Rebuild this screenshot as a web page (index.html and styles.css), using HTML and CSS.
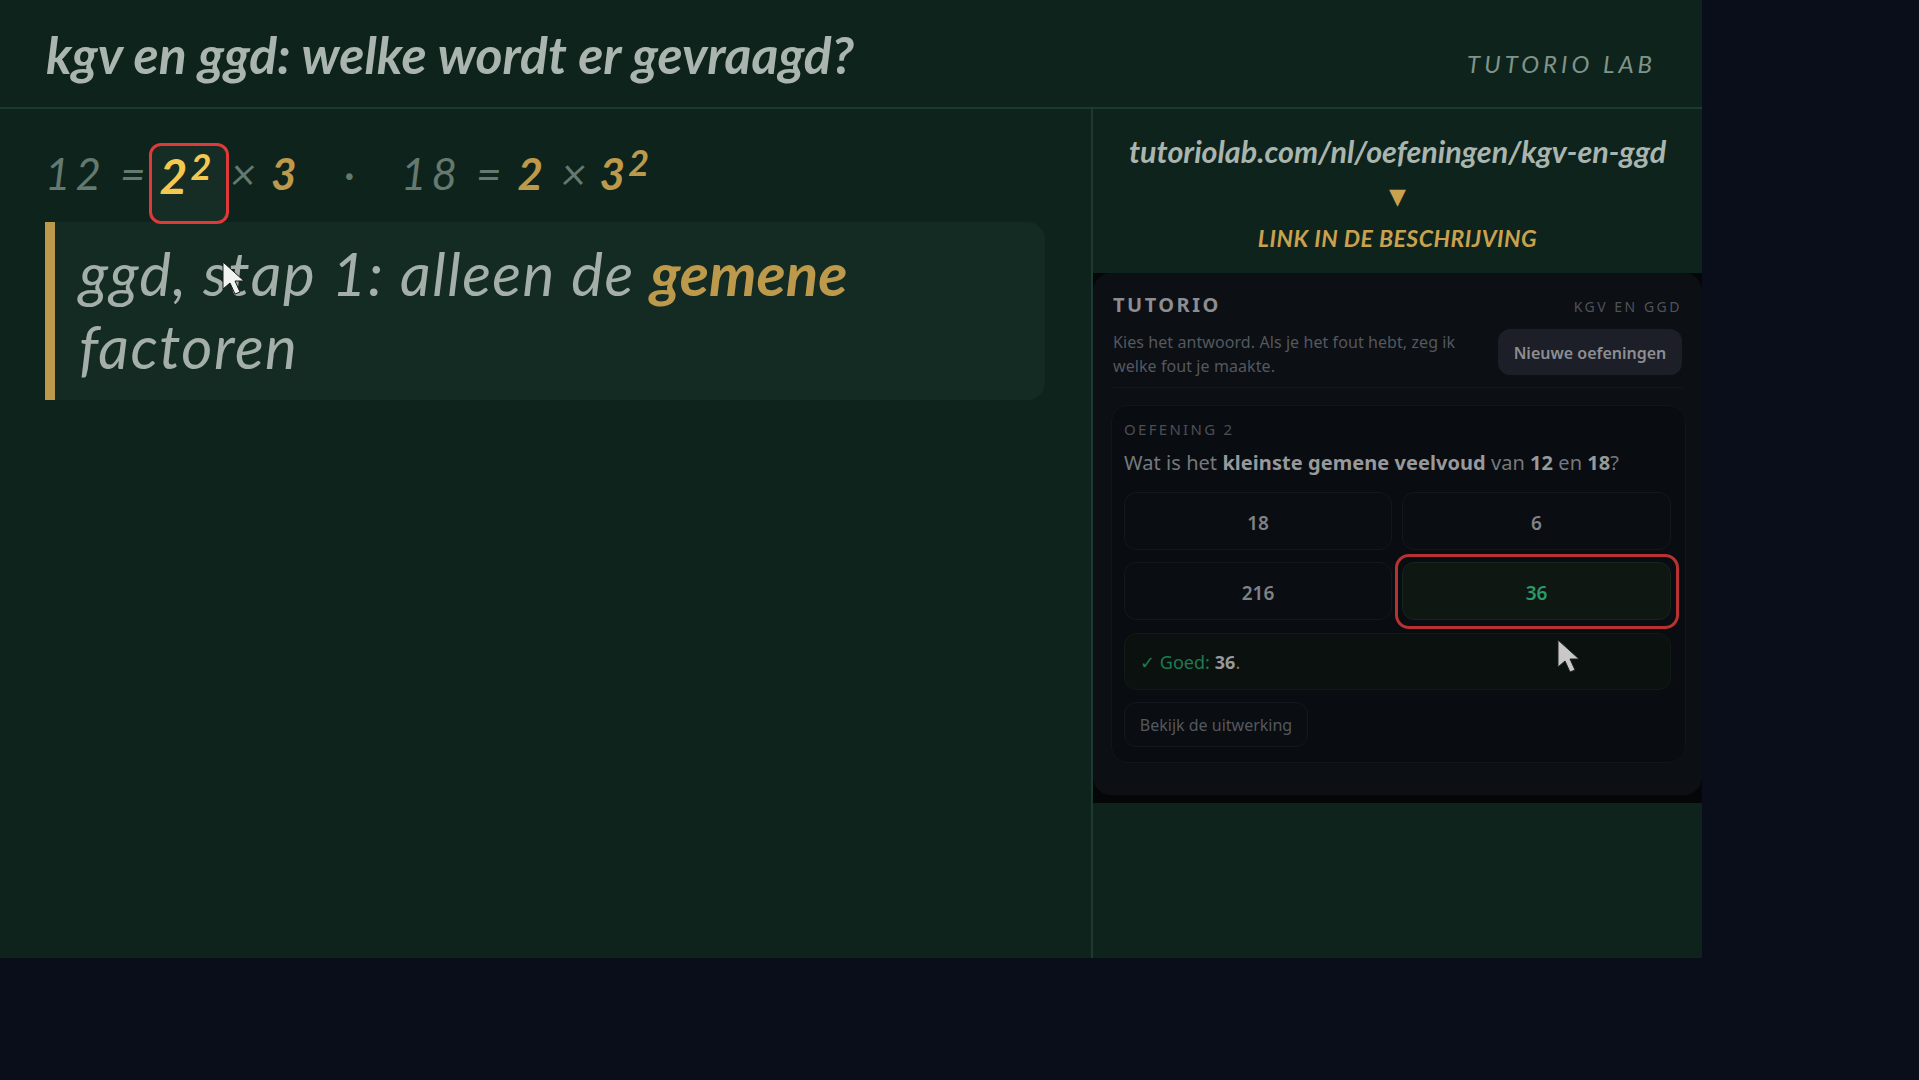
FILE: index.html
```html
<!DOCTYPE html>
<html lang="nl">
<head>
    <meta charset="UTF-8">
    <title>kgv en ggd</title>
    <link rel="stylesheet" href="styles.css">
</head>
<body>
    <div class="frame">
        <header class="top">
            <h1>kgv en ggd: welke wordt er gevraagd?</h1>
            <span class="brand">TUTORIO LAB</span>
        </header>
        <div class="main">
            <section class="board">
                <div class="factors">
                    <span class="dim num-a">12</span>
                    <span class="dim eq-a">=</span>
                    <span class="hit">2<sup>2</sup></span>
                    <span class="dim times-a">×</span>
                    <span class="gold three-a">3</span>
                    <span class="dim dot">·</span>
                    <span class="dim">18</span>
                    <span class="dim eq-b">=</span>
                    <span class="gold two-b">2</span>
                    <span class="dim times-b">×</span>
                    <span class="gold three-b">3<sup>2</sup></span>
                </div>
                <div class="callout">ggd, stap 1: alleen de <span class="gold">gemene</span> factoren</div>
            </section>
            <aside class="side">
                <div class="link-box">
                    <div class="url">tutoriolab.com/nl/oefeningen/kgv-en-ggd</div>
                    <div class="arrow">▼</div>
                    <div class="link-note">LINK IN DE BESCHRIJVING</div>
                </div>
                <div class="app">
                    <div class="panel">
                        <div class="panel-head">
                            <div class="panel-title">
                                <strong>TUTORIO</strong>
                                <span>KGV EN GGD</span>
                            </div>
                            <div class="panel-row">
                                <p>Kies het antwoord. Als je het fout hebt, zeg ik welke fout je maakte.</p>
                                <button class="btn-new">Nieuwe oefeningen</button>
                            </div>
                        </div>
                        <div class="card">
                            <div class="card-label">OEFENING 2</div>
                            <div class="question">Wat is het <b>kleinste gemene veelvoud</b> van <b>12</b> en <b>18</b>?</div>
                            <div class="options">
                                <button class="opt">18</button>
                                <button class="opt">6</button>
                                <button class="opt">216</button>
                                <button class="opt right">36</button>
                            </div>
                            <div class="result"><span class="ok"><span class="tick">✓</span> Goed:</span> <b>36</b>.</div>
                            <button class="btn-work">Bekijk de uitwerking</button>
                        </div>
                    </div>
                </div>
            </aside>
        </div>
    </div>

    <svg class="cursor cursor-a" width="24" height="34" viewBox="0 0 24 34"><path d="M1 1v27l7-6 5 11 5-2-5-11h9z" fill="#f2f4f2" stroke="#1a1a1a"/></svg>
    <svg class="cursor cursor-b" width="24" height="34" viewBox="0 0 24 34"><path d="M1 1v27l7-6 5 11 5-2-5-11h9z" fill="#c8c8c8" stroke="#222"/></svg>
</body>
</html>
```

FILE: styles.css
```css
* {
    box-sizing: border-box;
}

body {
    margin: 0;
    height: 1080px;
    overflow: hidden;
    position: relative;
    background-color: #0a0e1a;
    font-family: "Noto Sans", sans-serif;
}

.frame {
    width: 1702px;
    height: 958px;
    background-color: #0f231d;
    display: flex;
    flex-direction: column;
    font-family: Lato, sans-serif;
    font-style: italic;
}

.top {
    height: 109px;
    padding: 0 46px;
    display: flex;
    justify-content: space-between;
    align-items: center;
    border-bottom: 2px solid #1c3a30;
}

.top h1 {
    margin: 0;
    font-size: 51.7px;
    font-weight: 700;
    color: #a9b5ae;
}

.brand {
    margin-top: 20px;
    font-size: 24px;
    letter-spacing: 4px;
    color: #7f9489;
}

.main {
    flex: 1;
    display: flex;
}

.board {
    flex: 1;
    padding: 34px 46px 0 45px;
}

.factors {
    height: 79px;
    display: flex;
    align-items: flex-start;
    font-size: 44px;
    line-height: 60px;
}

.factors sup {
    margin-left: 3px;
    font-size: 36px;
    line-height: 0;
    vertical-align: 14px;
}

.dim {
    color: #64796f;
    letter-spacing: 5px;
}

.eq-a {
    margin: 0 3px 0 14px;
    letter-spacing: 0;
}

.times-a {
    margin: 0 10px 0 2px;
}

.dot {
    margin: 0 41px 0 47px;
}

.eq-b {
    margin: 0 16px 0 14px;
    letter-spacing: 0;
}

.two-b {
    margin-right: 18px;
}

.times-b {
    margin-right: 8px;
}

.gold {
    color: #bd9a4b;
    font-weight: 700;
}

.hit {
    width: 80px;
    height: 81px;
    padding: 0 8px;
    font-size: 48px;
    color: #f5c94f;
    font-weight: 700;
    background-color: #152d25;
    border: 3px solid #e0393a;
    border-radius: 12px;
}

.callout {
    width: 1000px;
    height: 178px;
    padding: 15px 110px 0 24px;
    font-size: 60px;
    letter-spacing: 1.5px;
    line-height: 73px;
    color: #a3afa8;
    background-color: #142b24;
    border-left: 10px solid #bd9a4b;
    border-radius: 0 18px 18px 0;
}

.callout .gold {
    letter-spacing: 0;
}

.side {
    width: 611px;
    border-left: 2px solid #1c3a30;
    display: flex;
    flex-direction: column;
}

.link-box {
    height: 164px;
    padding-top: 22px;
    text-align: center;
}

.url {
    font-size: 30.5px;
    font-weight: 700;
    line-height: 40px;
    color: #a9b5ae;
}

.arrow {
    font-family: "DejaVu Sans", sans-serif;
    font-style: normal;
    font-size: 22px;
    line-height: 28px;
    margin-top: 12px;
    color: #c9a24f;
}

.link-note {
    margin-top: 12px;
    font-size: 23px;
    font-weight: 700;
    letter-spacing: 0.5px;
    line-height: 30px;
    color: #c9a24f;
}

.app {
    height: 530px;
    background-color: #050608;
    font-family: "Noto Sans", sans-serif;
    font-style: normal;
}

.panel {
    height: 522px;
    padding: 17px 20px 0 20px;
    background-color: #0c0f14;
    border-radius: 18px;
}

.panel-head {
    height: 98px;
    border-bottom: 1px solid #14181d;
}

.panel-title {
    display: flex;
    justify-content: space-between;
    align-items: center;
    height: 28px;
}

.panel-title strong {
    font-size: 20px;
    letter-spacing: 2.5px;
    color: #8b8d90;
}

.panel-title span {
    font-size: 14px;
    letter-spacing: 2.5px;
    margin-top: 5px;
    color: #4f535a;
}

.panel-row {
    display: flex;
    justify-content: space-between;
    align-items: flex-start;
    margin-top: 10px;
}

.panel-row p {
    width: 345px;
    margin: 0;
    padding-top: 2px;
    font-size: 16px;
    letter-spacing: 0.08px;
    line-height: 24px;
    color: #54585f;
}

.btn-new {
    width: 184px;
    height: 46px;
    margin-top: 1px;
    padding-top: 2px;
    font: 600 16px "Noto Sans", sans-serif;
    color: #8c8e93;
    background-color: #1c1f27;
    border: 0;
    border-radius: 12px;
}

.card {
    height: 358px;
    margin-top: 17px;
    margin-left: -2px;
    margin-right: -4px;
    padding: 12px 12px 0;
    background-color: #090c11;
    border: 1px solid #12161a;
    border-radius: 16px;
}

.card-label {
    font-size: 15px;
    line-height: 22px;
    letter-spacing: 2.3px;
    color: #4b4f55;
}

.question {
    margin-top: 7px;
    font-size: 20px;
    letter-spacing: 0.05px;
    line-height: 32px;
    color: #76797c;
}

.question b {
    color: #97999b;
}

.options {
    display: grid;
    grid-template-columns: 268px 269px;
    grid-auto-rows: 58px;
    column-gap: 10px;
    row-gap: 12px;
    margin-top: 13px;
}

.opt {
    padding-top: 4px;
    font: 600 19px "Noto Sans", sans-serif;
    color: #7f8286;
    background-color: #0a0d12;
    border: 1px solid #14181d;
    border-radius: 12px;
}

.opt.right {
    color: #2b9a68;
    background-color: #0e1712;
    border-color: #17251f;
    position: relative;
}

.opt.right::after {
    content: "";
    position: absolute;
    inset: -9px -9px -10px -8px;
    border: 3px solid #b83232;
    border-radius: 14px;
}

.result {
    width: 547px;
    height: 57px;
    margin-top: 13px;
    padding: 0 15px;
    display: flex;
    align-items: center;
    gap: 5px;
    font-size: 18px;
    color: #76797c;
    background-color: #0a110e;
    border: 1px solid #111a16;
    border-radius: 12px;
}

.result b {
    color: #97999b;
    margin-right: -5px;
}

.ok {
    color: #1f7a52;
}

.tick {
    font-family: "DejaVu Sans", sans-serif;
    font-weight: 700;
}

.btn-work {
    display: block;
    width: 184px;
    height: 45px;
    margin-top: 12px;
    padding-top: 2px;
    font: 400 16px "Noto Sans", sans-serif;
    color: #54585f;
    background-color: #0a0d12;
    border: 1px solid #14181d;
    border-radius: 12px;
}

.cursor {
    position: absolute;
}

.cursor-a {
    left: 222px;
    top: 261px;
}

.cursor-b {
    left: 1557px;
    top: 639px;
}
```
